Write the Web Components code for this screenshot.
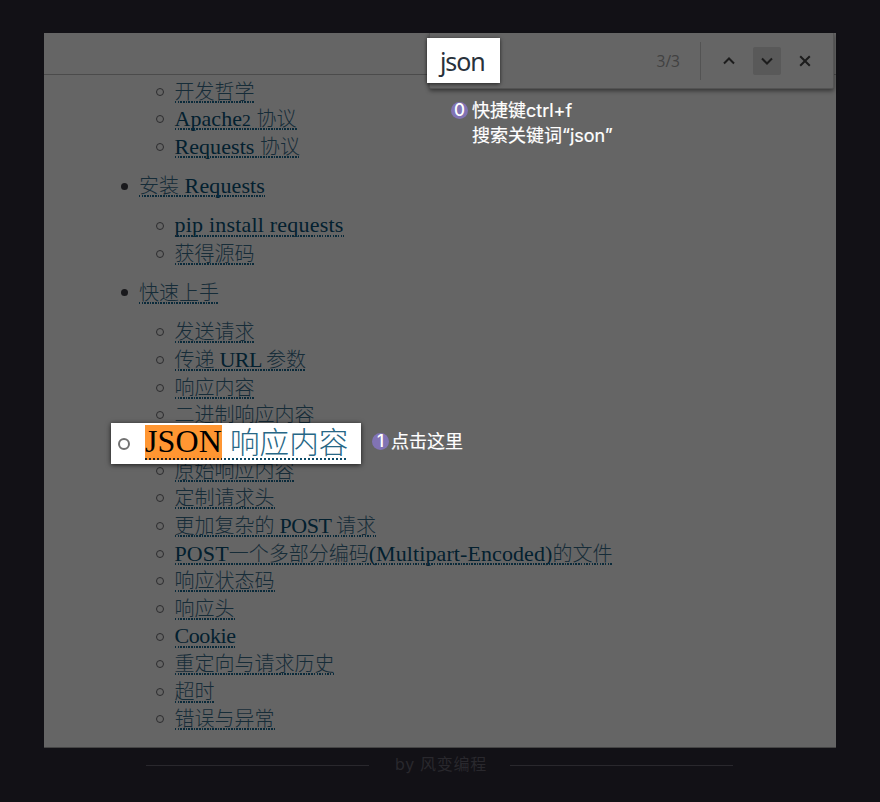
<!DOCTYPE html>
<html lang="zh-CN"><head><meta charset="utf-8"><title>Requests</title>
<style>html,body{margin:0;height:100%;background:#121116;overflow:hidden}</style></head><body>
<guide-page></guide-page>
<script>
const define=(n,c)=>customElements.define(n,c);
const root=(el,html)=>{const t=document.createElement('template');t.innerHTML=html;const r=el.attachShadow({mode:'open'});r.append(t.content.cloneNode(true));return r;};

// Dotted-underline link; Latin runs are spread to fill the width in `w`.
define('doc-link',class extends HTMLElement{
  connectedCallback(){
    const r=root(this,`<style>
      :host{display:inline-block;position:relative;white-space:pre;height:24px;line-height:24px;color:var(--ink,#03202f);font-family:"Liberation Serif","Noto Sans CJK SC",serif}
      .han{font-family:"Noto Sans CJK SC",sans-serif;font-weight:300;font-size:var(--han,20px);color:var(--han-ink,#162c38)}
      .lat{font-size:var(--lat,22px)}
      .old{font-size:.8em}
      .rule{position:absolute;left:0;right:0;bottom:var(--rule-y,0px);height:2px;background:repeating-linear-gradient(90deg,var(--rule,#0a2a3a) 0 var(--dot,1.5px),transparent var(--dot,1.5px) var(--pitch,2.67px))}
      </style><span id="t"></span><span class="rule"></span>`);
    const t=r.getElementById('t');
    const parts=this.getAttribute('text').match(/[\x00-\x7f]+|[^\x00-\x7f]+/g);
    for(const p of parts){
      const s=document.createElement('span');
      s.className=p.charCodeAt(0)>127?'han':'lat';
      if(p.startsWith('Apache2')){s.innerHTML='Apache<span class="old">2</span> ';}
      else s.textContent=p;
      t.append(s);
    }
    const w=+this.getAttribute('w');
    if(w){
      const lat=[...t.querySelectorAll('.lat')],n=lat.reduce((a,s)=>a+s.textContent.length,0);
      const d=(w-t.getBoundingClientRect().width)/n;
      lat.forEach(s=>s.style.letterSpacing=d+'px');
      this.style.width=w+'px';
    }
  }
});

define('doc-item',class extends HTMLElement{
  connectedCallback(){root(this,`<style>
    :host{display:flex;height:27.65px;align-items:center;padding-left:35.5px;position:relative}
    :host([top]){padding-left:0;margin:11.6px 0 12px}
    i{box-sizing:border-box;width:8px;height:8px;border:1.3px solid #2c2c2e;border-radius:50%;margin:2px 11px 0 -19px;flex:none}
    :host([top]) i{background:#19191c;border:0;width:7px;height:7px;margin:2px 11px 0 -18px}
    </style><i></i><doc-link text="${this.getAttribute('text')}" w="${this.getAttribute('w')||''}"></doc-link>`);}
});

define('find-bar',class extends HTMLElement{
  connectedCallback(){root(this,`<style>
    :host{position:absolute;left:385px;right:2px;top:0;height:56px;box-sizing:border-box;background:#656565;border-bottom:1px solid #535353;border-right:1px solid #555;border-left:1px solid #565656;border-radius:0 0 2px 2px;box-shadow:0 2px 4px #0007;display:flex;align-items:center;justify-content:flex-end;padding-right:14px;font:15.5px "Open Sans",sans-serif;color:#414141}
    hr{border:0;width:1px;height:38px;background:#535353;margin:0 14px 0 20px}
    b{display:flex;width:28px;height:28px;border-radius:2px;margin-left:10px}
    hr+b{margin-left:0}
    b.on{background:#595959}
    svg{width:28px;height:28px;fill:none;stroke:#1c1c1c;stroke-width:2}
    </style><span>3/3</span><hr>
    <b><svg viewBox="0 0 28 28"><path d="M9 16.5l5-5 5 5"/></svg></b>
    <b class="on"><svg viewBox="0 0 28 28"><path d="M9 11.5l5 5 5-5"/></svg></b>
    <b><svg viewBox="0 0 28 28"><path d="M9.2 9.2l9.6 9.6m0-9.6l-9.6 9.6"/></svg></b>`);}
});

define('step-note',class extends HTMLElement{
  connectedCallback(){root(this,`<style>
    :host{position:absolute;display:flex;gap:var(--gap,4px);color:#fff;font:400 18px/25px Inter,"Noto Sans CJK SC",sans-serif;white-space:nowrap}
    b{width:17px;height:17px;border-radius:50%;background:#8173b4;font:500 17px/17px Inter,sans-serif;text-align:center;margin-top:4px}
    div{-webkit-text-stroke:.2px #fff}
    </style><b>${this.getAttribute('n')}</b><div><slot></slot></div>`);}
});

define('page-credit',class extends HTMLElement{
  connectedCallback(){root(this,`<style>
    :host{display:flex;align-items:center;width:587px;height:24px;margin:5px 0 0 146px;color:#29282d;font:16px/24px Inter,"Noto Sans CJK SC",sans-serif;letter-spacing:.7px;white-space:nowrap}
    i{height:1px;background:#29282d;width:223px;flex:none}span{flex:1;text-align:center;padding:0 0 2px 3px}
    </style><i></i><span><slot></slot></span><i></i>`);}
});

define('guide-page',class extends HTMLElement{
  connectedCallback(){
    const rows=[['开发哲学'],['Apache2 协议',122],['Requests 协议',125.5],['安装 Requests',126,1],['pip install requests',169],['获得源码'],['快速上手',0,1],['发送请求'],['传递 URL 参数',131.5],['响应内容'],['二进制响应内容'],['',1],['原始响应内容'],['定制请求头'],['更加复杂的 POST 请求',201.5],['POST一个多部分编码(Multipart-Encoded)的文件',438],['响应状态码'],['响应头'],['Cookie',61],['重定向与请求历史'],['超时'],['错误与异常']];
    root(this,`<style>
    :host{display:block;padding-top:33px;height:769px;background:#121116}
    main{position:relative;width:792px;height:714px;margin-left:44px;background:#656565;border-bottom:1px solid #454545}
    header{height:41px;border-bottom:1px solid #4b4b4b}
    nav{padding:2px 0 0 95px}
    .gap{height:27.65px}
    .input{position:absolute;left:383px;top:5px;width:73px;height:45px;box-sizing:border-box;padding:2px 0 0 13px;background:#fff;box-shadow:0 1px 4px #000a;font:25px/43px "Noto Sans","Open Sans",sans-serif;letter-spacing:-1.1px;color:#29313b}
    .focus{position:absolute;left:67px;top:390px;width:250px;height:41px;background:#fff;box-shadow:0 1px 5px #000b;
      --ink:#000;--han-ink:#276786;--lat:32px;--han:29.6px;--rule:#0b4b69;--dot:2.4px;--pitch:4px}
    .focus i{position:absolute;left:7px;top:15px;width:12px;height:12px;box-sizing:border-box;border:2px solid #727272;border-radius:50%}
    .focus div{display:flex;position:absolute;left:34px;top:2px;height:35px}
    .focus doc-link{height:35px;line-height:32px}
    .focus .hit{background:#ff9632;--rule:#222}
    .focus .rest{margin-left:2px;padding-left:6px;line-height:31px}
    </style><main><header></header><nav>${rows.map(([t,w,top])=>t?`<doc-item text="${t}" ${w?`w="${w}"`:''} ${top?'top':''}></doc-item>`:'<div class="gap"></div>').join('')}</nav>
    <find-bar></find-bar><div class="input">json</div>
    <step-note n="0" style="left:407px;top:65px">快捷键ctrl+f<br>搜索关键词“json”</step-note>
    <section class="focus"><i></i><div><doc-link class="hit" text="JSON" w="77"></doc-link><doc-link class="rest" text="响应内容"></doc-link></div></section>
    <step-note n="1" style="left:328px;top:396px;--gap:2px">点击这里</step-note>
    </main><page-credit>by 风变编程</page-credit>`);}
});
</script></body></html>
